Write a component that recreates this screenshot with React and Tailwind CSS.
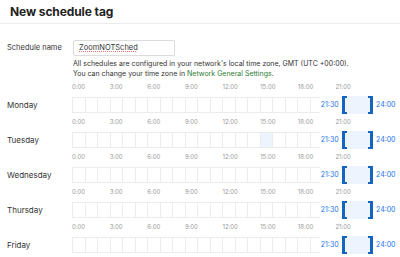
import React from "react";

const days = ["Monday", "Tuesday", "Wednesday", "Thursday", "Friday"];
const ticks = ["0:00", "3:00", "6:00", "9:00", "12:00", "15:00", "18:00", "21:00"];

function DayRow({ name, highlight }) {
  return (
    <div className="flex items-end h-[35px]">
      <div className="w-[65px] h-[16px] flex items-center text-[8px] text-[#333]">{name}</div>
      <div className="w-[301px] flex flex-col">
        <div className="grid grid-cols-8 h-[13px] text-[6px] text-[#999] leading-[6px]">
          {ticks.map((t) => (
            <div key={t}>{t}</div>
          ))}
        </div>
        <div className="relative h-[16px]">
          <div className="grid grid-cols-24 h-full border-t border-l border-b border-[#ececec]">
            {Array.from({ length: 24 }).map((_, i) => (
              <div
                key={i}
                className={
                  "border-r border-[#ececec] " +
                  (highlight && i === 15 ? "bg-[#eef4fd]" : "bg-white")
                }
              />
            ))}
          </div>
          <div className="absolute top-[-1px] bottom-[-1px] left-[89.58%] w-[10.42%] bg-[#eef4fd]">
            <div className="absolute left-0 top-0 bottom-0 w-[5px] border-l-[3px] border-t-2 border-b-2 border-[#1565c0]" />
            <div className="absolute right-0 top-0 bottom-0 w-[5px] border-r-[3px] border-t-2 border-b-2 border-[#1565c0]" />
            <div className="absolute right-full mr-[2px] top-0 bottom-0 flex items-center text-[7px] text-[#1a73e8] bg-white px-[1px]">21:30</div>
            <div className="absolute left-full ml-[3px] top-0 bottom-0 flex items-center text-[7px] text-[#1a73e8]">24:00</div>
          </div>
        </div>
      </div>
    </div>
  );
}

export default function App() {
  return (
    <div className="w-[400px] h-[257px] bg-white overflow-hidden font-['Inter',sans-serif] text-[#333]">
      <div className="h-[24px] border-b border-[#ececec] px-[10px] flex items-center pt-[1px]">
        <h1 className="text-[12px] font-bold text-[#222] tracking-[-0.1px]">New schedule tag</h1>
      </div>
      <div className="pl-[7px] pt-[16px]">
        <div className="flex items-center">
          <div className="w-[66px] text-[7.5px] text-[#333]">Schedule name</div>
          <div className="w-[102px] h-[16px] border border-[#dcdcdc] rounded-[2px] flex items-center px-[5px] text-[7.5px] text-[#333]">
            <span className="underline decoration-dotted decoration-[#e57373] decoration-[1px] underline-offset-[1px]">ZoomNOTSched</span>
          </div>
        </div>
        <div className="ml-[66px] mt-[3px] text-[7px] leading-[10px] text-[#333]">
          <div>All schedules are configured in your network's local time zone, GMT (UTC +00:00).</div>
          <div>
            You can change your time zone in <span className="text-[#2e7d32]">Network General Settings</span>.
          </div>
        </div>
        <div className="-mt-[1px]">
          {days.map((d) => (
            <DayRow key={d} name={d} highlight={d === "Tuesday"} />
          ))}
        </div>
      </div>
    </div>
  );
}
